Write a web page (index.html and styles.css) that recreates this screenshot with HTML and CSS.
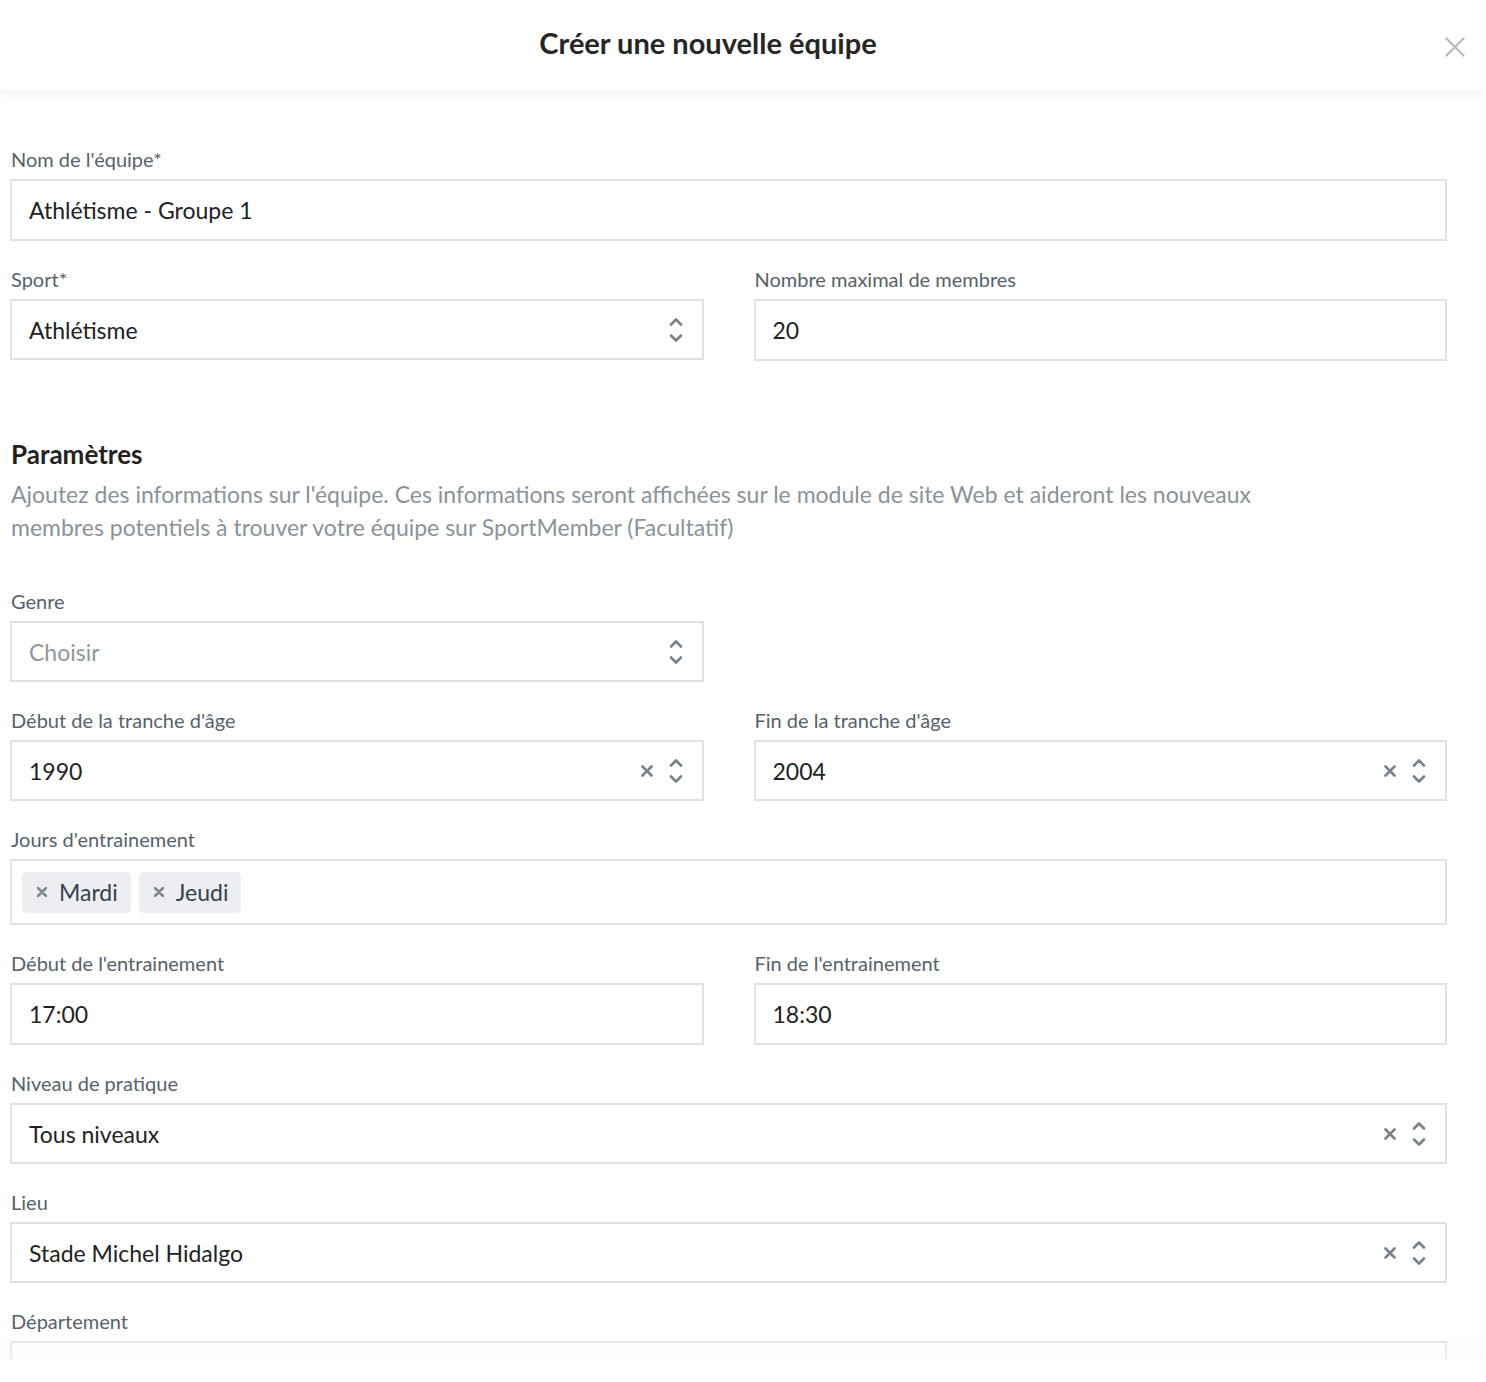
FILE: index.html
```html
<!DOCTYPE html>
<html lang="fr">
<head>
<meta charset="utf-8">
<title>Créer une nouvelle équipe</title>
<link rel="stylesheet" href="styles.css">
</head>
<body>
<div class="modal">
  <header class="modal-header">
    <h1 class="modal-title">Créer une nouvelle équipe</h1>
    <button class="close-btn" aria-label="Fermer">
      <svg width="20" height="20" viewBox="0 0 20 20"><path d="M1.5 1.5L18.5 18.5M18.5 1.5L1.5 18.5" stroke="#b3b8bb" stroke-width="2.2" fill="none" stroke-linecap="round"/></svg>
    </button>
  </header>
  <div class="modal-body">
    <div class="field">
      <label class="label">Nom de l'équipe*</label>
      <div class="input text">Athlétisme - Groupe 1</div>
    </div>
    <div class="row">
      <div class="field">
        <label class="label">Sport*</label>
        <div class="input select"><span class="val">Athlétisme</span><span class="icons"><svg class="chev" width="14" height="26" viewBox="0 0 14 26"><path d="M2 7.5L7 2.5L12 7.5M2 18.5L7 23.5L12 18.5" stroke="#77828a" stroke-width="2.6" fill="none" stroke-linecap="round" stroke-linejoin="round"/></svg></span></div>
      </div>
      <div class="field">
        <label class="label">Nombre maximal de membres</label>
        <div class="input text">20</div>
      </div>
    </div>

    <section class="section">
      <h2 class="section-title">Paramètres</h2>
      <p class="section-desc">Ajoutez des informations sur l'équipe. Ces informations seront affichées sur le module de site Web et aideront les nouveaux membres potentiels à trouver votre équipe sur SportMember (Facultatif)</p>
    </section>

    <div class="row">
      <div class="field">
        <label class="label">Genre</label>
        <div class="input select"><span class="val placeholder">Choisir</span><span class="icons"><svg class="chev" width="14" height="26" viewBox="0 0 14 26"><path d="M2 7.5L7 2.5L12 7.5M2 18.5L7 23.5L12 18.5" stroke="#77828a" stroke-width="2.6" fill="none" stroke-linecap="round" stroke-linejoin="round"/></svg></span></div>
      </div>
      <div class="field"></div>
    </div>
    <div class="row">
      <div class="field">
        <label class="label">Début de la tranche d'âge</label>
        <div class="input select"><span class="val">1990</span><span class="icons"><svg class="clear" width="12" height="12" viewBox="0 0 12 12"><path d="M1.5 1.5L10.5 10.5M10.5 1.5L1.5 10.5" stroke="#77828a" stroke-width="2.6" fill="none" stroke-linecap="round"/></svg><svg class="chev" width="14" height="26" viewBox="0 0 14 26"><path d="M2 7.5L7 2.5L12 7.5M2 18.5L7 23.5L12 18.5" stroke="#77828a" stroke-width="2.6" fill="none" stroke-linecap="round" stroke-linejoin="round"/></svg></span></div>
      </div>
      <div class="field">
        <label class="label">Fin de la tranche d'âge</label>
        <div class="input select"><span class="val">2004</span><span class="icons"><svg class="clear" width="12" height="12" viewBox="0 0 12 12"><path d="M1.5 1.5L10.5 10.5M10.5 1.5L1.5 10.5" stroke="#77828a" stroke-width="2.6" fill="none" stroke-linecap="round"/></svg><svg class="chev" width="14" height="26" viewBox="0 0 14 26"><path d="M2 7.5L7 2.5L12 7.5M2 18.5L7 23.5L12 18.5" stroke="#77828a" stroke-width="2.6" fill="none" stroke-linecap="round" stroke-linejoin="round"/></svg></span></div>
      </div>
    </div>
    <div class="field">
      <label class="label">Jours d'entrainement</label>
      <div class="input tags">
        <span class="tag"><svg class="tag-x" width="10" height="10" viewBox="0 0 10 10"><path d="M1 1L9 9M9 1L1 9" stroke="#7c868c" stroke-width="2.6" fill="none" stroke-linecap="round"/></svg>Mardi</span>
        <span class="tag"><svg class="tag-x" width="10" height="10" viewBox="0 0 10 10"><path d="M1 1L9 9M9 1L1 9" stroke="#7c868c" stroke-width="2.6" fill="none" stroke-linecap="round"/></svg>Jeudi</span>
      </div>
    </div>
    <div class="row">
      <div class="field">
        <label class="label">Début de l'entrainement</label>
        <div class="input text">17:00</div>
      </div>
      <div class="field">
        <label class="label">Fin de l'entrainement</label>
        <div class="input text">18:30</div>
      </div>
    </div>
    <div class="field">
      <label class="label">Niveau de pratique</label>
      <div class="input select"><span class="val">Tous niveaux</span><span class="icons"><svg class="clear" width="12" height="12" viewBox="0 0 12 12"><path d="M1.5 1.5L10.5 10.5M10.5 1.5L1.5 10.5" stroke="#77828a" stroke-width="2.6" fill="none" stroke-linecap="round"/></svg><svg class="chev" width="14" height="26" viewBox="0 0 14 26"><path d="M2 7.5L7 2.5L12 7.5M2 18.5L7 23.5L12 18.5" stroke="#77828a" stroke-width="2.6" fill="none" stroke-linecap="round" stroke-linejoin="round"/></svg></span></div>
    </div>
    <div class="field">
      <label class="label">Lieu</label>
      <div class="input select"><span class="val">Stade Michel Hidalgo</span><span class="icons"><svg class="clear" width="12" height="12" viewBox="0 0 12 12"><path d="M1.5 1.5L10.5 10.5M10.5 1.5L1.5 10.5" stroke="#77828a" stroke-width="2.6" fill="none" stroke-linecap="round"/></svg><svg class="chev" width="14" height="26" viewBox="0 0 14 26"><path d="M2 7.5L7 2.5L12 7.5M2 18.5L7 23.5L12 18.5" stroke="#77828a" stroke-width="2.6" fill="none" stroke-linecap="round" stroke-linejoin="round"/></svg></span></div>
    </div>
    <div class="field">
      <label class="label">Département</label>
      <div class="input select"><span class="val"></span></div>
    </div>
  </div>
  <div class="bottom-fade"></div>
</div>
</body>
</html>
```

FILE: styles.css
```css
* { box-sizing: border-box; }
html, body { margin: 0; padding: 0; background: #ffffff; }
body { font-family: Lato, "Noto Sans", sans-serif; color: #222; }

.modal {
  position: relative;
  width: 1484px;
  height: 1360px;
  overflow: hidden;
  background: #fff;
}

.modal-header {
  position: relative;
  z-index: 2;
  height: 90px;
  display: flex;
  align-items: center;
  justify-content: center;
  background: #fff;
  box-shadow: 0 2px 12px rgba(40, 40, 80, 0.07);
}
.modal-title {
  margin: 0;
  font-size: 29px;
  font-weight: 700;
  color: #262626;
  padding-bottom: 5px;
  padding-right: 68px;
}
.close-btn {
  position: absolute;
  right: 19px;
  top: 37px;
  width: 20px;
  height: 20px;
  padding: 0;
  border: 0;
  background: none;
  display: block;
}
.close-btn svg { display: block; }

.modal-body {
  padding: 58px 37px 0 10px;
}

.field { margin-bottom: 27px; flex: 1 1 0; min-width: 0; }
.row { display: flex; gap: 50px; }

.label {
  display: block;
  font-size: 20px;
  line-height: 22px;
  color: #56626a;
  margin: 0 0 9px 1px;
}

.input {
  border: 2px solid #dfe0e8;
  background: #fff;
  font-size: 23px;
  color: #222;
  display: flex;
  align-items: center;
}
.input.text { height: 62px; padding: 0 17px; }
.input.select { height: 61px; padding: 0 19px 0 17px; }
.val { flex: 1; }
.placeholder { color: #8e989d; }
.icons { display: flex; align-items: center; gap: 16px; }
.icons svg { display: block; }
.chev { margin-top: 1px; }

.input.tags {
  height: 66px;
  padding: 0 10px;
  gap: 8px;
}
.tag {
  display: inline-flex;
  align-items: center;
  height: 41px;
  padding: 0 13px 0 15px;
  background: #eceef2;
  border-radius: 5px;
  color: #36424a;
  font-size: 23px;
}
.tag-x { margin-right: 12px; display: block; }

.section { margin: 51px 0 46px 0; }
.section-title {
  margin: 0 0 9px 1px;
  font-size: 26px;
  line-height: 30px;
  font-weight: 700;
  color: #222;
}
.section-desc {
  margin: 0 0 0 1px;
  font-size: 23px;
  line-height: 33px;
  color: #8a9398;
  max-width: 1270px;
}

.bottom-fade {
  position: absolute;
  left: 0;
  right: 0;
  bottom: 0;
  height: 28px;
  background: linear-gradient(to bottom, rgba(248,248,250,0), rgba(248,248,250,0.6));
  pointer-events: none;
}
```
